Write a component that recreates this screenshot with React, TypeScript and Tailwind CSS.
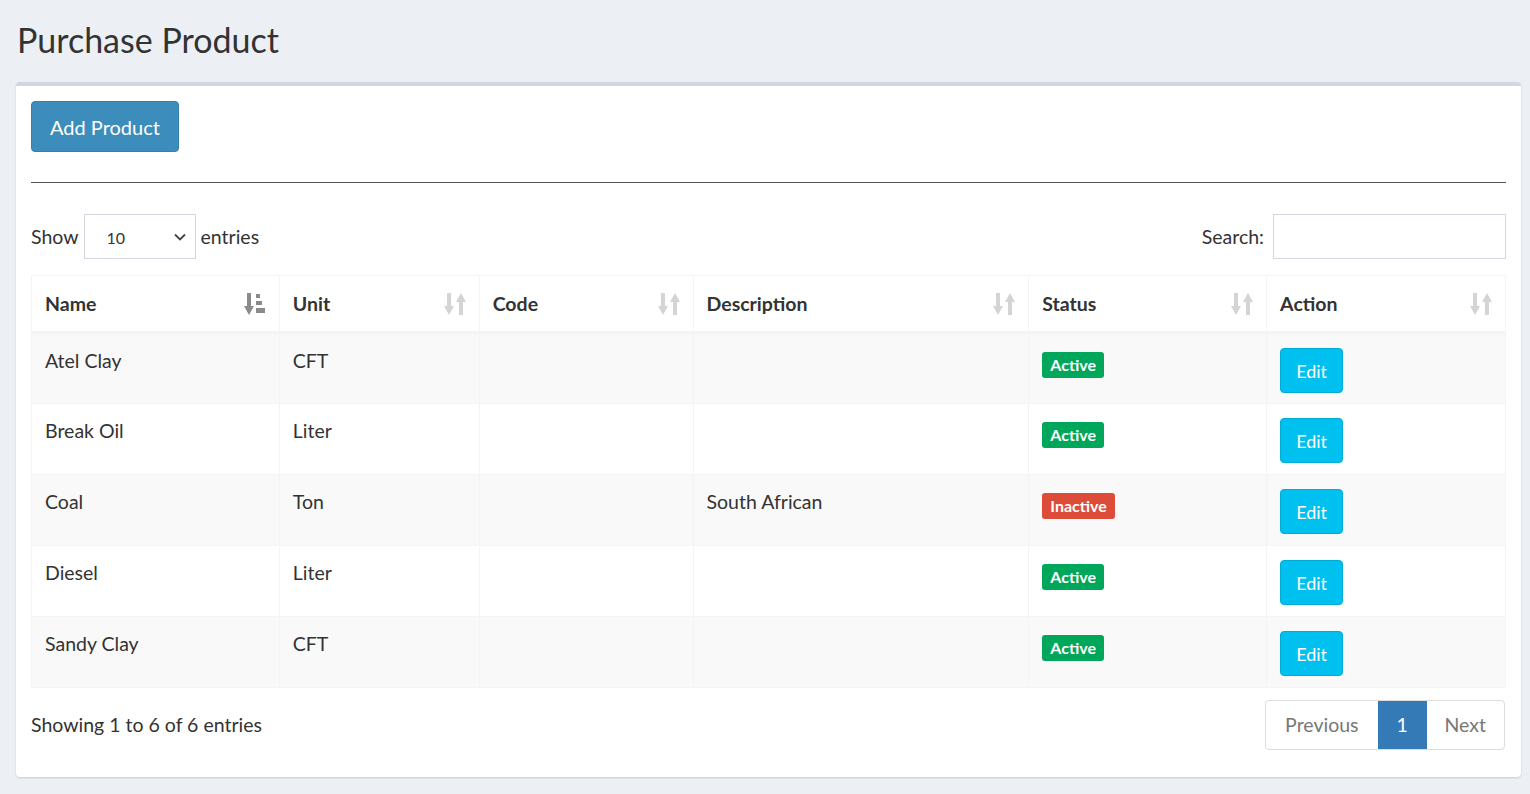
import React from 'react';

const font = { fontFamily: 'Lato, "Noto Sans", sans-serif' };

const products = [
    { name: 'Atel Clay', unit: 'CFT', code: '', description: '', active: true },
    { name: 'Break Oil', unit: 'Liter', code: '', description: '', active: true },
    { name: 'Coal', unit: 'Ton', code: '', description: 'South African', active: false },
    { name: 'Diesel', unit: 'Liter', code: '', description: '', active: true },
    { name: 'Sandy Clay', unit: 'CFT', code: '', description: '', active: true },
];

const SortBoth = () => (
    <svg width="22" height="24" viewBox="0 0 22 24" className="text-[#d4d4d4]" fill="currentColor">
        {/* down arrow */}
        <rect x="3" y="1" width="4" height="15" />
        <polygon points="0,14 10,14 5,23" />
        {/* up arrow */}
        <rect x="15" y="8" width="4" height="15" />
        <polygon points="12,10 22,10 17,1" />
    </svg>
);

const SortAsc = () => (
    <svg width="22" height="24" viewBox="0 0 22 24" className="text-[#8a8a8a]" fill="currentColor">
        <rect x="3" y="1" width="4" height="15" />
        <polygon points="0,14 10,14 5,23" />
        <rect x="12" y="2" width="4" height="4" />
        <rect x="12" y="9" width="6" height="4" />
        <rect x="12" y="16" width="9" height="5" />
    </svg>
);

const columns = [
    { label: 'Name', w: 'w-[248px]', icon: <SortAsc /> },
    { label: 'Unit', w: 'w-[200px]', icon: <SortBoth /> },
    { label: 'Code', w: 'w-[214px]', icon: <SortBoth /> },
    { label: 'Description', w: 'w-[336px]', icon: <SortBoth /> },
    { label: 'Status', w: 'w-[238px]', icon: <SortBoth /> },
    { label: 'Action', w: 'w-[239px]', icon: <SortBoth /> },
];

export default function App() {
    return (
        <div className="min-h-screen bg-[#ecf0f5] text-[#333] pl-4 pr-[9px] pt-[18px] pb-4" style={font}>
            <h1 className="text-[34px] leading-[44px] text-[#333] mb-5 ml-[1px]">Purchase Product</h1>

            {/* CARD */}
            <div className="bg-white rounded-[4px] border-t-[4px] border-[#d2d6de] shadow-[0_1px_2px_rgba(0,0,0,0.15)] px-[15px] pt-[15px] pb-[27px]">
                <button className="h-[51px] px-[18px] bg-[#3c8dbc] border border-[#367fa9] rounded-[4px] text-white text-[20px]">
                    Add Product
                </button>

                <div className="mt-[30px] border-t border-[#555]" />

                {/* CONTROLS */}
                <div className="flex items-center justify-between mt-[31px] text-[19.5px]">
                    <div className="flex items-center gap-[5px]">
                        <span>Show</span>
                        <div className="w-[112px] h-[45px] border border-[#d2d6de] flex items-center justify-between pl-[22px] pr-[8px]">
                            <span className="text-[16px] mt-[2px]">10</span>
                            <svg width="14" height="14" viewBox="0 0 14 14" fill="none" stroke="#444" strokeWidth="1.8">
                                <polyline points="2,4.5 7,9.5 12,4.5" />
                            </svg>
                        </div>
                        <span>entries</span>
                    </div>
                    <div className="flex items-center gap-[9px]">
                        <span>Search:</span>
                        <div className="w-[233px] h-[45px] border border-[#d2d6de]" />
                    </div>
                </div>

                {/* TABLE */}
                <table className="mt-[16px] w-full border-collapse border border-[#f4f4f4] text-[19.5px]">
                    <thead>
                        <tr className="h-[57px]">
                            {columns.map((c) => (
                                <th key={c.label} className={`${c.w} border border-[#f4f4f4] border-b-[3px] px-[13px] text-left font-bold align-middle`}>
                                    <div className="flex items-center justify-between">
                                        <span>{c.label}</span>
                                        {c.icon}
                                    </div>
                                </th>
                            ))}
                        </tr>
                    </thead>
                    <tbody>
                        {products.map((p, i) => (
                            <tr key={p.name} className={`h-[71px] ${i % 2 === 0 ? 'bg-[#f9f9f9]' : 'bg-white'}`}>
                                <td className="border border-[#f4f4f4] px-[13px] pt-[15px] align-top leading-6">{p.name}</td>
                                <td className="border border-[#f4f4f4] px-[13px] pt-[15px] align-top leading-6">{p.unit}</td>
                                <td className="border border-[#f4f4f4] px-[13px] pt-[15px] align-top leading-6">{p.code}</td>
                                <td className="border border-[#f4f4f4] px-[13px] pt-[15px] align-top leading-6">{p.description}</td>
                                <td className="border border-[#f4f4f4] px-[13px] pt-[15px] align-top">
                                    <span className={`inline-flex items-center rounded-[3px] px-[8px] h-[26px] text-[16px] font-bold text-white ${p.active ? 'bg-[#00a65a]' : 'bg-[#dd4b39]'}`}>
                                        {p.active ? 'Active' : 'Inactive'}
                                    </span>
                                </td>
                                <td className="border border-[#f4f4f4] px-[13px] pt-[14px] pb-[10px] align-top">
                                    <button className="block w-[63px] h-[45px] rounded-[4px] bg-[#00c0ef] border border-[#00acd6] text-white text-[18px] pt-[2px]">
                                        Edit
                                    </button>
                                </td>
                            </tr>
                        ))}
                    </tbody>
                </table>

                {/* FOOTER */}
                <div className="flex items-center justify-between mt-[12px] text-[19.5px]">
                    <span>Showing 1 to 6 of 6 entries</span>
                    <div className="flex h-[50px] mr-[1px] border border-[#ddd] rounded-[4px] overflow-hidden">
                        <span className="px-[19px] flex items-center text-[#777]">Previous</span>
                        <span className="w-[49px] flex items-center justify-center bg-[#337ab7] text-white">1</span>
                        <span className="px-[18px] flex items-center text-[#777]">Next</span>
                    </div>
                </div>
            </div>
        </div>
    );
}
